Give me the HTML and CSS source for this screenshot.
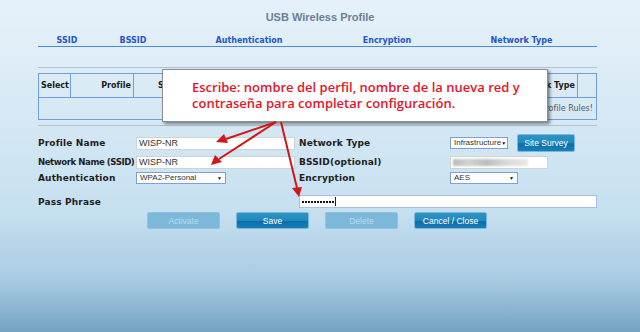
FILE: index.html
```html
<!DOCTYPE html>
<html lang="es">
<head>
    <meta charset="UTF-8">
    <title>USB Wireless Profile</title>
    <link rel="stylesheet" href="styles.css">
</head>
<body>
    <h1 class="title">USB Wireless Profile</h1>

    <div class="page">
        <div class="scan-head">
            <span>SSID</span>
            <span>BSSID</span>
            <span>Authentication</span>
            <span>Encryption</span>
            <span>Network Type</span>
        </div>

        <div class="rule"></div>

        <table class="profiles">
            <tr>
                <th class="c-select">Select</th>
                <th class="c-profile">Profile</th>
                <th class="c-ssid">SSID</th>
                <th class="c-auth"></th>
                <th class="c-enc"></th>
                <th class="c-type">Network Type</th>
                <th class="c-blank"></th>
            </tr>
            <tr>
                <td colspan="7" class="empty">No Profile Rules!</td>
            </tr>
        </table>

        <div class="rule rule-low"></div>

        <div class="form">
            <label class="lbl">Profile Name</label>
            <div class="field wide">WISP-NR</div>
            <label class="lbl">Network Type</label>
            <div class="ctrl-row">
                <div class="select sel-type">Infrastructure <span class="caret">▼</span></div>
                <button class="btn survey">Site Survey</button>
            </div>

            <label class="lbl lbl-tight">Network Name (SSID)</label>
            <div class="field wide">WISP-NR</div>
            <label class="lbl">BSSID(optional)</label>
            <div class="field bssid"><span class="blurred"></span></div>

            <label class="lbl">Authentication</label>
            <div class="select sel-auth">WPA2-Personal <span class="caret">▼</span></div>
            <label class="lbl">Encryption</label>
            <div class="select sel-enc">AES <span class="caret">▼</span></div>

            <label class="lbl span-2 row-pass">Pass Phrase</label>
            <div class="field pass span-2 row-pass"><span class="dots"></span><span class="cursor"></span></div>
        </div>

        <div class="actions">
            <button class="btn off">Activate</button>
            <button class="btn">Save</button>
            <button class="btn off">Delete</button>
            <button class="btn">Cancel / Close</button>
        </div>
    </div>

    <div class="callout">
        Escribe: nombre del perfil, nombre de la nueva red y<br>
        contraseña para completar configuración.
    </div>

    <svg class="arrows" width="640" height="332" viewBox="0 0 640 332">
        <g stroke="#d01818" stroke-width="2" fill="none">
            <line x1="276" y1="122" x2="226" y2="139"/>
            <line x1="276" y1="122" x2="219" y2="159"/>
            <line x1="281" y1="122" x2="297" y2="188"/>
        </g>
        <g fill="#d01818">
            <polygon points="216,142 224,134 228,143"/>
            <polygon points="211,165 215,155 222,162"/>
            <polygon points="299,197 292,188 302,187"/>
        </g>
    </svg>
</body>
</html>
```

FILE: styles.css
```css
body {
    margin: 0;
    height: 332px;
    overflow: hidden;
    font-family: "DejaVu Sans", Verdana, sans-serif;
    background: linear-gradient(to bottom, #e6f1fa 0%, #d5e8f4 120px, #c6e0f0 210px, #a9cbe2 280px, #74a3c3 332px);
}
.title {
    margin: 0;
    padding-top: 11px;
    height: 14px;
    text-align: center;
    font-family: "Liberation Sans", Arial, sans-serif;
    font-size: 11px;
    font-weight: bold;
    color: #6d7f91;
}
.page {
    width: 559px;
    margin-left: 38px;
}
.scan-head {
    display: grid;
    grid-template-columns: 58px 74px 158px 118px 151px;
    margin-top: 10px;
    height: 11px;
    align-items: center;
    border-bottom: 1px solid #4f8bd6;
    font-size: 8px;
    font-weight: bold;
    color: #2456c6;
    text-align: center;
}
.rule {
    margin-top: 20px;
    height: 1px;
    background: #b7c2cc;
}
.rule-low {
    margin-top: 5px;
}
.profiles {
    margin-top: 5px;
    width: 559px;
    border-collapse: collapse;
    table-layout: fixed;
    font-size: 8px;
}
.profiles th,
.profiles td {
    border: 1px solid #6f9fe0;
    padding: 0 2px;
}
.profiles th {
    height: 23px;
    text-align: right;
    color: #1a1a1a;
}
.profiles .c-select { width: 25px; text-align: left; }
.profiles .c-profile { width: 55px; }
.profiles .c-ssid { width: 43px; text-align: left; padding-left: 24px; }
.profiles .c-auth { width: 125px; }
.profiles .c-enc { width: 105px; }
.profiles .c-type { width: 106px; }
.profiles .c-blank { width: 13px; }
.profiles .empty {
    height: 21px;
    text-align: right;
    padding-right: 3px;
    font-weight: normal;
    color: #505a64;
}
.form {
    display: grid;
    grid-template-columns: 98px 163px 151px 147px;
    grid-template-rows: 20px 18px 14px 23px;
    margin-top: 7px;
    align-items: center;
}
.form .span-2 {
    grid-column: span 2;
}
.form .row-pass {
    align-self: end;
}
.lbl {
    font-size: 9px;
    font-weight: bold;
    letter-spacing: 0.15px;
    white-space: nowrap;
    color: #1e1e1e;
}
.lbl-tight {
    font-size: 8.6px;
    letter-spacing: -0.45px;
}
.lbl.row-pass {
    margin-bottom: 1px;
}
.field {
    box-sizing: border-box;
    height: 13px;
    background: #fff;
    border: 1px solid #cfd3d6;
    font-family: "Liberation Sans", Arial, sans-serif;
    font-size: 9px;
    line-height: 11px;
    padding-left: 2px;
    color: #333;
}
.field.wide {
    width: 159px;
}
.field.bssid {
    width: 98px;
    padding: 2px 2px;
}
.blurred {
    display: block;
    width: 75px;
    height: 7px;
    background: linear-gradient(to right, #b9b9b9, #d2d2d2 20%, #bcbcbc 45%, #d9d9d9 70%, #e8e8e8);
    filter: blur(1px);
}
.field.pass {
    width: 298px;
    border-color: #a5c0e6;
    display: flex;
    align-items: center;
    padding-left: 2px;
}
.dots {
    width: 32px;
    height: 2px;
    background: repeating-linear-gradient(to right, #111 0 2px, transparent 2px 3px);
}
.cursor {
    width: 1px;
    height: 9px;
    background: #222;
    margin-left: 1px;
}
.select {
    box-sizing: border-box;
    height: 12px;
    background: #fff;
    border: 1px solid #7e9fd8;
    font-family: "Liberation Sans", Arial, sans-serif;
    font-size: 8px;
    line-height: 10px;
    padding: 0 3px;
    color: #333;
    display: flex;
    justify-content: space-between;
}
.caret {
    font-size: 5px;
    color: #111;
}
.sel-type { width: 58px; }
.sel-auth { width: 90px; }
.sel-enc { width: 68px; }
.ctrl-row {
    display: flex;
    align-items: center;
    gap: 9px;
}
.btn {
    box-sizing: border-box;
    width: 73px;
    height: 17px;
    padding: 0;
    border: 1px solid #7db6de;
    border-radius: 2px;
    background: linear-gradient(to bottom, #2d93c4 0%, #2189bd 50%, #0b6ea8 55%, #1a7fb8 100%);
    font-family: "Liberation Sans", Arial, sans-serif;
    font-size: 8.5px;
    color: #fff;
}
.btn.survey {
    width: 58px;
    height: 18px;
}
.btn.off {
    background: #7db8da;
    border-color: #8ec4e4;
    color: #b9dbee;
}
.actions {
    display: flex;
    gap: 16px;
    padding-left: 109px;
    margin-top: 4px;
}
.callout {
    position: absolute;
    left: 162px;
    top: 69px;
    box-sizing: border-box;
    width: 386px;
    height: 53px;
    padding: 9px 0 0 29px;
    background: #fff;
    border: 1px solid #8a8f96;
    box-shadow: 2px 2px 3px rgba(0, 0, 0, 0.45);
    font-family: "Open Sans", sans-serif;
    font-size: 13px;
    font-weight: 600;
    line-height: 16px;
    color: #e8132b;
}
.arrows {
    position: absolute;
    left: 0;
    top: 0;
}
```
